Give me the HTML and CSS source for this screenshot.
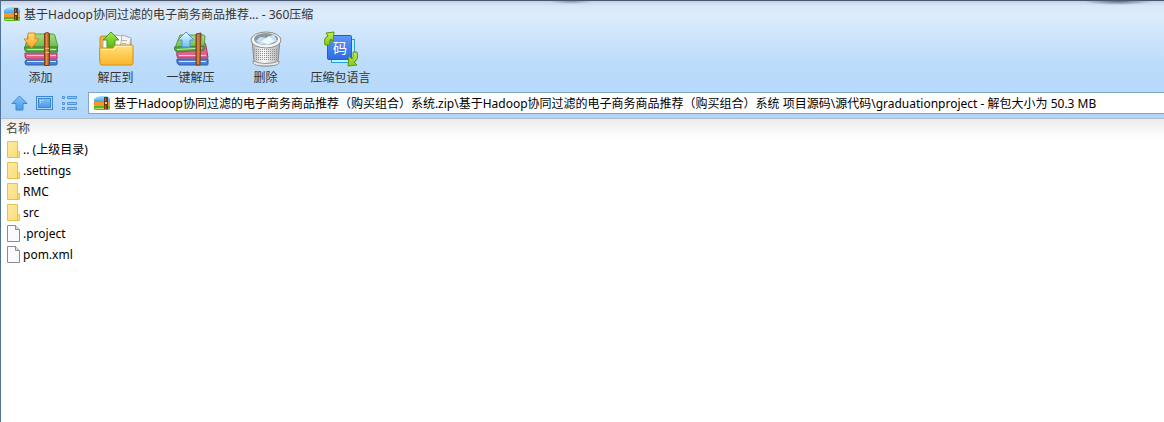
FILE: index.html
```html
<!DOCTYPE html>
<html lang="zh-CN">
<head>
    <meta charset="UTF-8">
    <meta name="viewport" content="width=device-width, initial-scale=1.0">
    <title>360压缩</title>
    <link rel="stylesheet" href="styles.css">
</head>
<body>
    <!-- Shared icons -->
    <svg class="sprite" aria-hidden="true">
        <defs>
            <linearGradient id="g-sky" x1="0" y1="0" x2="0" y2="1">
                <stop offset="0" stop-color="#9ce2fc"/><stop offset="1" stop-color="#2f9ae6"/>
            </linearGradient>
            <linearGradient id="g-green" x1="0" y1="0" x2="0" y2="1">
                <stop offset="0" stop-color="#a9dc88"/><stop offset="1" stop-color="#6cbc4a"/>
            </linearGradient>
            <linearGradient id="g-orange" x1="0" y1="0" x2="0" y2="1">
                <stop offset="0" stop-color="#ffdc6e"/><stop offset="1" stop-color="#ffa32a"/>
            </linearGradient>
            <linearGradient id="g-strap" x1="0" y1="0" x2="1" y2="0">
                <stop offset="0" stop-color="#8a4418"/><stop offset=".4" stop-color="#e09048"/><stop offset="1" stop-color="#8c481c"/>
            </linearGradient>
            <linearGradient id="g-folder" x1="0" y1="0" x2="0" y2="1">
                <stop offset="0" stop-color="#ffe27a"/><stop offset="1" stop-color="#fbb52c"/>
            </linearGradient>
            <linearGradient id="g-up" x1="0" y1="0" x2="0" y2="1">
                <stop offset="0" stop-color="#a4ec48"/><stop offset="1" stop-color="#52b416"/>
            </linearGradient>
            <linearGradient id="g-lime" x1="0" y1="0" x2="0" y2="1">
                <stop offset="0" stop-color="#c4ee48"/><stop offset="1" stop-color="#86c818"/>
            </linearGradient>
            <linearGradient id="g-ice" x1="0" y1="0" x2="0" y2="1">
                <stop offset="0" stop-color="#f2fbff"/><stop offset="1" stop-color="#6cc0f8"/>
            </linearGradient>
            <linearGradient id="g-bin" x1="0" y1="0" x2="1" y2="0">
                <stop offset="0" stop-color="#b4b4b4"/><stop offset=".4" stop-color="#ffffff"/><stop offset="1" stop-color="#acacac"/>
            </linearGradient>
            <linearGradient id="g-code" x1="0" y1="0" x2="0" y2="1">
                <stop offset="0" stop-color="#5b98f8"/><stop offset="1" stop-color="#2f6ce4"/>
            </linearGradient>
            <linearGradient id="g-nav" x1="0" y1="0" x2="0" y2="1">
                <stop offset="0" stop-color="#82c4fa"/><stop offset="1" stop-color="#4a98ea"/>
            </linearGradient>
            <linearGradient id="g-dir" x1="0" y1="0" x2="1" y2="1">
                <stop offset="0" stop-color="#ffeaa0"/><stop offset="1" stop-color="#fbdc78"/>
            </linearGradient>
            <pattern id="p-mesh" width="2" height="2" patternUnits="userSpaceOnUse">
                <rect width="1" height="1" fill="#8c8c8c"/>
            </pattern>
        </defs>

        <symbol id="icon-zip" viewBox="0 0 16 14">
            <path d="M0 3 3 1 7 0h6l3 2v5H0z" fill="url(#g-sky)"/>
            <path d="M0 6h16v4H0z" fill="#f9932a"/>
            <path d="M0 10h16v3l-1 1H1l-1-1z" fill="#5cb41e"/>
            <path d="M1 12h14v1H1z" fill="#b4e060"/>
            <path d="M10 1h4v12h-4z" fill="#6a3414"/>
            <path d="M11 2h1v3h-1zM11 9h1v4h-1z" fill="#b8682c"/>
            <path d="M11 6h2v2h-2z" fill="#f4c47a"/>
        </symbol>

        <symbol id="icon-books" viewBox="0 0 36 36">
            <path d="M3 29h31v4q0 1-1 1H4q-2 0-2-3z" fill="#4a80d8" stroke="#2c5ca8"/>
            <path d="M4 30.500h29" stroke="#d4e6ff"/>
            <path d="M2 22h32v6H4q-2 0-2-3z" fill="#e0608e" stroke="#a83860"/>
            <path d="M4 24.500h29" stroke="#ffc8dc"/>
            <path d="M6 3h24q2 0 2 2l3 11H2l3-11z" fill="url(#g-green)" stroke="#5a9c3c"/>
            <path d="M1.500 16h33v5H4q-2.500 0-2.500-5z" fill="#58ac42" stroke="#3c8030"/>
            <path d="M4 18.500h29" stroke="#c4e8ac"/>
        </symbol>

        <symbol id="icon-folder" viewBox="0 0 13 17">
            <path d="M.5.500h10v10h2v6H.5z" fill="url(#g-dir)" stroke="#e6c052"/>
            <path d="M10.500 10.500v6" stroke="#e6c052"/>
        </symbol>

        <symbol id="icon-file" viewBox="0 0 13 17">
            <path d="M.5.500h8l4 4v12H.5z" fill="#fbfbfb" stroke="#8c8c8c"/>
            <path d="M8.500.500v4h4" fill="#dcdcdc" stroke="#8c8c8c"/>
        </symbol>
    </svg>

    <div class="window">
        <header class="chrome">
            <div class="titlebar">
                <svg class="zip-icon"><use href="#icon-zip"/></svg>
                <h1>基于Hadoop协同过滤的电子商务商品推荐... - 360压缩</h1>
            </div>

            <div class="toolbar">
                <button type="button">
                    <svg viewBox="0 0 36 36">
                        <use href="#icon-books"/>
                        <path d="M21.500 2.500q3-2 5 0V34.500h-5z" fill="url(#g-strap)" stroke="#7a4018"/>
                        <path d="M22 17.500h4M22 21.500h4" stroke="#f2b470"/>
                        <path d="M5 2h7v6h4l-7.500 9L1 8h4z" fill="url(#g-orange)" stroke="#dc8a24"/>
                    </svg>
                    <span>添加</span>
                </button>
                <button type="button">
                    <svg viewBox="0 0 36 36">
                        <path d="M2 7q0-2 2-2h9l2 3h18v22H2z" fill="#f4b13a" stroke="#c88c28"/>
                        <path d="M5 8 18 4l12 2v12H5z" fill="#fdfdfd" stroke="#acacac"/>
                        <path d="M24 4l9 3-2 12h-9z" fill="#f4f4f4" stroke="#acacac"/>
                        <path d="M24 9.500h5M24 12.500h4" stroke="#b4b4b4"/>
                        <path d="M13 1 21 9h-4v8H9V9H5z" fill="url(#g-up)" stroke="#449a18"/>
                        <path d="M1.500 18q0-1 1-1H15l2-3h17q1 0 1 1v17q0 2-2 2H4q-2 0-2-2z" fill="url(#g-folder)" stroke="#d0901c"/>
                        <path d="M3 18.500h13l2-3h15" fill="none" stroke="#fff3bc"/>
                    </svg>
                    <span>解压到</span>
                </button>
                <button type="button">
                    <svg viewBox="0 0 36 36">
                        <path d="M4 28h31v5q0 1-1 1H6q-3-2-2-6z" fill="#4a80d8" stroke="#2c5ca8"/>
                        <path d="M6 30.500h27" stroke="#d4e6ff"/>
                        <path d="M4 21 32 12q1 1 3 15H5q-2-2-1-6z" fill="#e0608e" stroke="#a83860"/>
                        <path d="M6 24.500h27" stroke="#ffc8dc"/>
                        <path d="M7 4h23q2 0 2 2l-1 10-29 1z" fill="url(#g-green)" stroke="#5a9c3c"/>
                        <path d="M1.500 16 31 15v4L4 21q-3-1-2.500-5z" fill="#58ac42" stroke="#3c8030"/>
                        <path d="M4 18.500 29 17" stroke="#c4e8ac"/>
                        <path d="m23 3 5-1-1 32h-4z" fill="url(#g-strap)" stroke="#7a4018"/>
                        <path d="M13 1 21 9h-4v7H9V9H5z" fill="url(#g-ice)" stroke="#4894dc"/>
                    </svg>
                    <span>一键解压</span>
                </button>
                <button type="button">
                    <svg viewBox="0 0 36 36">
                        <path d="M4 8h28l-2 23q-1 4-12 4T6 31z" fill="url(#g-bin)" stroke="#8c8c8c"/>
                        <path d="M6 17h25l-2 13H7z" fill="url(#p-mesh)"/>
                        <path d="M5 30q13 5 26 0v2q-1 3-13 3T5 32z" fill="#e8e8e8" stroke="#969696"/>
                        <ellipse cx="18" cy="9" rx="15" ry="8" fill="#f4f4f4" stroke="#8c8c8c"/>
                        <ellipse cx="18" cy="8" rx="12" ry="6" fill="#8c989e"/>
                        <path d="m8 10 4-4 7 1 7-4 3 7-9 4-8-1z" fill="#c4e2f4"/>
                        <path d="m13 11 8-6 5 5-6 3z" fill="#f0faff"/>
                    </svg>
                    <span>删除</span>
                </button>
                <button type="button">
                    <svg viewBox="0 0 36 36">
                        <rect x="8.500" y="8.500" width="23" height="23" fill="#c4efff" stroke="#24a0e0"/>
                        <rect x="4.500" y="4.500" width="24" height="24" rx="1" fill="url(#g-code)" stroke="#2a5cc4"/>
                        <text class="code-glyph" x="17" y="22">码</text>
                        <path d="M2 14Q0 7 5 5L3 2l8-1-1 9-2-2q-2 1-1 6z" fill="url(#g-lime)" stroke="#5c9414"/>
                        <path d="M34 21q2 8-3 10l3 3-9 1 1-10 3 3q2-2 1-7z" fill="url(#g-lime)" stroke="#5c9414"/>
                    </svg>
                    <span>压缩包语言</span>
                </button>
            </div>

            <div class="navbar">
                <button type="button" aria-label="向上">
                    <svg viewBox="0 0 17 16">
                        <path d="M8.500 1 16 8.500h-4V15H5V8.500H1z" fill="url(#g-nav)" stroke="#3a88d4"/>
                    </svg>
                </button>
                <button type="button" aria-label="视图">
                    <svg viewBox="0 0 17 16">
                        <rect x=".5" y="1.500" width="16" height="13" fill="#a8d8fc" stroke="#3a88d4"/>
                        <rect x="2.500" y="3.500" width="12" height="9" fill="url(#g-nav)" stroke="#3a88d4"/>
                        <path d="M4 5.500h1M4 7.500h1M6 5.500h1" stroke="#d4eeff"/>
                    </svg>
                </button>
                <button type="button" aria-label="列表">
                    <svg viewBox="0 0 17 16">
                        <path d="M1.500 1.500h2v2h-2zM1.500 7.500h2v2h-2zM1.500 12.500h2v2h-2zM6.500 1.500h9v2h-9zM6.500 7.500h9v2h-9zM6.500 12.500h9v2h-9z" fill="#90ccfa" stroke="#4a94de"/>
                    </svg>
                </button>
                <div class="address">
                    <svg class="zip-icon"><use href="#icon-zip"/></svg>
                    <input type="text" aria-label="路径" value="基于Hadoop协同过滤的电子商务商品推荐（购买组合）系统.zip\基于Hadoop协同过滤的电子商务商品推荐（购买组合）系统 项目源码\源代码\graduationproject - 解包大小为 50.3 MB">
                </div>
            </div>
        </header>

        <table class="files">
            <thead>
                <tr><th scope="col">名称</th></tr>
            </thead>
            <tbody>
                <tr><td><div class="entry"><svg><use href="#icon-folder"/></svg>.. (上级目录)</div></td></tr>
                <tr><td><div class="entry"><svg><use href="#icon-folder"/></svg>.settings</div></td></tr>
                <tr><td><div class="entry"><svg><use href="#icon-folder"/></svg>RMC</div></td></tr>
                <tr><td><div class="entry"><svg><use href="#icon-folder"/></svg>src</div></td></tr>
                <tr><td><div class="entry"><svg><use href="#icon-file"/></svg>.project</div></td></tr>
                <tr><td><div class="entry"><svg><use href="#icon-file"/></svg>pom.xml</div></td></tr>
            </tbody>
        </table>
    </div>
</body>
</html>
```

FILE: styles.css
```css
* {
    box-sizing: border-box;
}

body {
    margin: 0;
    font-family: "Noto Sans", "Noto Sans CJK SC", sans-serif;
    font-size: 12px;
    color: #000;
    background-color: #fff;
}

button, input {
    font: inherit;
}

.sprite {
    position: absolute;
    width: 0;
    height: 0;
}

.window {
    min-height: 100vh;
    border-top: 1px solid #46586f;
    border-left: 1px solid #4f7397;
}

/* Glass frame, with the dark spots that show through its top edge */
.chrome {
    background:
        radial-gradient(closest-side, #8490a6, transparent) 49% -3px / 44px 6px no-repeat,
        radial-gradient(closest-side, #5c687c, transparent) 99% -4px / 70px 8px no-repeat,
        linear-gradient(#c4cfe2 0, #d9e8f8 5px, #dcecfc 14px, #d2e7fb 30px, #bcdcfa 62px, #b2d6fb 100%);
    border-bottom: 1px solid #b4bcc6;
}

/* Title bar */
.titlebar {
    display: flex;
    align-items: center;
    gap: 4px;
    height: 26px;
    padding-left: 3px;
}

.titlebar h1 {
    margin: 0;
    font-size: 12px;
    font-weight: normal;
    color: #333;
}

.zip-icon {
    flex: none;
    width: 16px;
    height: 14px;
}

/* Toolbar */
.toolbar {
    display: flex;
    padding: 4px 2px 0;
}

.toolbar button {
    display: flex;
    flex-direction: column;
    align-items: center;
    width: 75px;
    padding: 0;
    border: none;
    background: none;
    color: #333;
    line-height: 22px;
    cursor: pointer;
}

.toolbar svg {
    width: 36px;
    height: 36px;
}

.toolbar span {
    white-space: nowrap;
}

.code-glyph {
    font-size: 14px;
    fill: #fff;
    text-anchor: middle;
}

/* Navigation row */
.navbar {
    display: flex;
    align-items: center;
    gap: 8px;
    padding: 3px 0 4px 10px;
}

.navbar button {
    display: flex;
    padding: 0;
    border: none;
    background: none;
    cursor: pointer;
}

.navbar button svg {
    width: 17px;
    height: 16px;
}

.address {
    display: flex;
    flex: 1;
    align-items: center;
    gap: 4px;
    height: 22px;
    margin-left: 2px;
    padding-left: 5px;
    background-color: #fff;
    border: 1px solid #7fa6cc;
    border-right: none;
}

.address input {
    flex: 1;
    min-width: 0;
    padding: 0;
    border: none;
    outline: none;
    background: none;
    color: #000;
}

/* File list */
.files {
    width: 100%;
    border-collapse: collapse;
}

.files th {
    height: 20px;
    padding: 0 5px;
    font-weight: normal;
    line-height: 20px;
    text-align: left;
    color: #444;
    background: linear-gradient(#ececec, #fff);
}

.files td {
    padding: 0 6px;
}

.entry {
    display: flex;
    align-items: center;
    gap: 3px;
    height: 21px;
    line-height: 20px;
}

.entry svg {
    width: 13px;
    height: 17px;
}
```
